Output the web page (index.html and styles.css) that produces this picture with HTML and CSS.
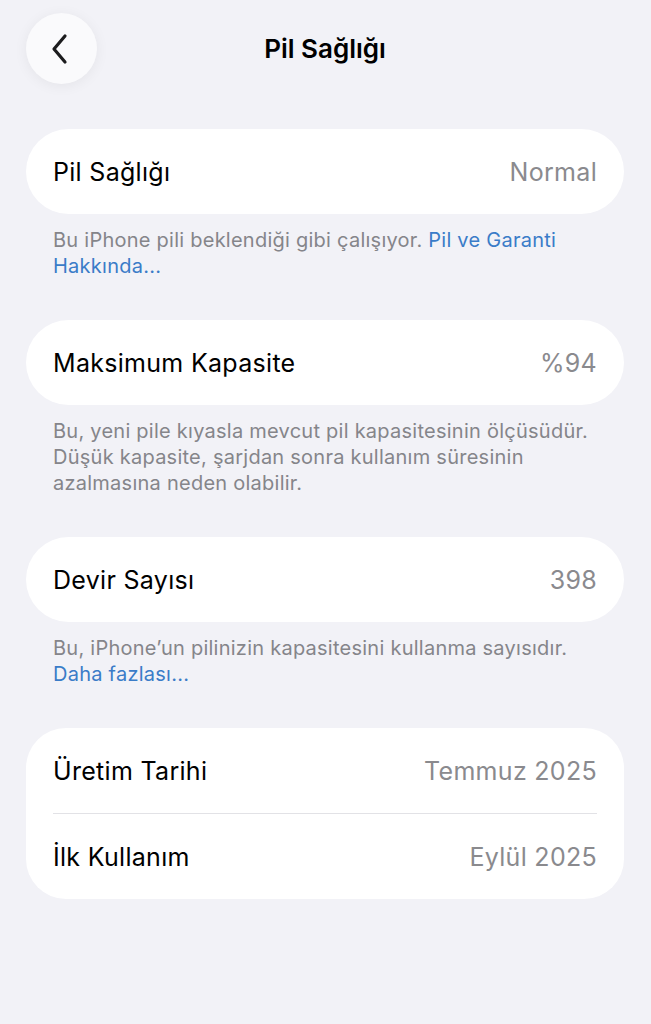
FILE: index.html
```html
<!DOCTYPE html>
<html lang="tr">
<head>
    <meta charset="UTF-8">
    <meta name="viewport" content="width=device-width, initial-scale=1.0">
    <title>Pil Sağlığı</title>
    <link rel="stylesheet" href="styles.css">
</head>
<body>
    <div class="screen">
        <div class="nav-bar">
            <button class="back-btn" type="button">
                <svg width="20" height="32" viewBox="0 0 20 32">
                    <path d="M15 3 L4 16 L15 29" fill="none" stroke="#1c1c1e" stroke-width="3.2" stroke-linecap="round" stroke-linejoin="round"/>
                </svg>
            </button>
            <h1 class="nav-title">Pil Sağlığı</h1>
        </div>

        <div class="group">
            <div class="row">
                <span class="label">Pil Sağlığı</span>
                <span class="value">Normal</span>
            </div>
        </div>
        <p class="footer">Bu iPhone pili beklendiği gibi çalışıyor. <a href="#">Pil ve Garanti Hakkında...</a></p>

        <div class="group">
            <div class="row">
                <span class="label">Maksimum Kapasite</span>
                <span class="value">%94</span>
            </div>
        </div>
        <p class="footer">Bu, yeni pile kıyasla mevcut pil kapasitesinin ölçüsüdür. Düşük kapasite, şarjdan sonra kullanım süresinin azalmasına neden olabilir.</p>

        <div class="group">
            <div class="row">
                <span class="label">Devir Sayısı</span>
                <span class="value">398</span>
            </div>
        </div>
        <p class="footer">Bu, iPhone’un pilinizin kapasitesini kullanma sayısıdır. <a href="#">Daha fazlası...</a></p>

        <div class="group group-multi">
            <div class="row">
                <span class="label">Üretim Tarihi</span>
                <span class="value">Temmuz 2025</span>
            </div>
            <div class="row">
                <span class="label">İlk Kullanım</span>
                <span class="value">Eylül 2025</span>
            </div>
        </div>
    </div>
</body>
</html>
```

FILE: styles.css
```css
body {
    margin: 0;
    background-color: #f2f2f7;
    font-family: Inter, "Noto Sans", sans-serif;
    color: #000;
}
.screen {
    padding: 13px 27px 40px 26px;
}
.nav-bar {
    display: flex;
    align-items: center;
    height: 71px;
    margin-bottom: 45px;
}
.back-btn {
    width: 71px;
    height: 71px;
    border: none;
    border-radius: 50%;
    background-color: #fafafc;
    box-shadow: 0 2px 14px rgba(0, 0, 0, 0.06);
    display: flex;
    align-items: center;
    justify-content: center;
    padding: 0 3px 0 0;
    cursor: pointer;
}
.nav-title {
    flex: 1;
    margin: 0 71px 0 0;
    text-align: center;
    font-size: 26px;
    font-weight: 600;
}
.group {
    background-color: #fff;
    border-radius: 43px;
    padding: 0 27px;
}
.group-multi {
    border-radius: 40px;
}
.row {
    display: flex;
    justify-content: space-between;
    align-items: center;
    height: 85px;
    font-size: 25px;
    letter-spacing: 0.3px;
}
.group-multi .row + .row {
    border-top: 1px solid #e2e2e6;
}
.value {
    color: #8a8a8e;
}
.footer {
    margin: 13px 0 41px;
    padding: 0 27px;
    font-size: 20px;
    line-height: 26px;
    color: #85858a;
    letter-spacing: 0.25px;
}
.footer a {
    color: #3a7cc8;
    text-decoration: none;
}
```
